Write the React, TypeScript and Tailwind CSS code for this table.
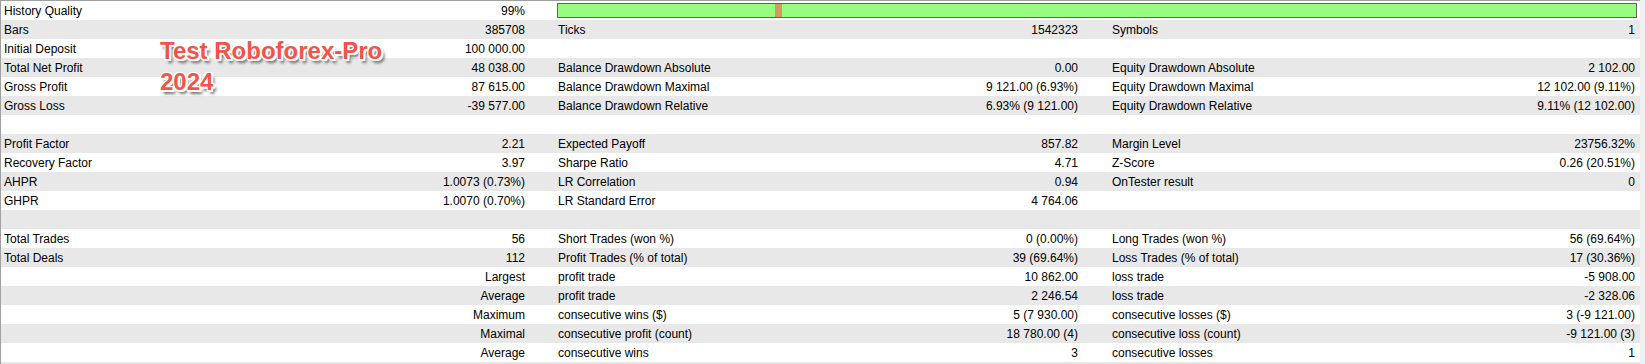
type Row = [string, string, string, string, string, string];

const rows: Row[] = [
  ["Bars", "385708", "Ticks", "1542323", "Symbols", "1"],
  ["Initial Deposit", "100 000.00", "", "", "", ""],
  ["Total Net Profit", "48 038.00", "Balance Drawdown Absolute", "0.00", "Equity Drawdown Absolute", "2 102.00"],
  ["Gross Profit", "87 615.00", "Balance Drawdown Maximal", "9 121.00 (6.93%)", "Equity Drawdown Maximal", "12 102.00 (9.11%)"],
  ["Gross Loss", "-39 577.00", "Balance Drawdown Relative", "6.93% (9 121.00)", "Equity Drawdown Relative", "9.11% (12 102.00)"],
  ["", "", "", "", "", ""],
  ["Profit Factor", "2.21", "Expected Payoff", "857.82", "Margin Level", "23756.32%"],
  ["Recovery Factor", "3.97", "Sharpe Ratio", "4.71", "Z-Score", "0.26 (20.51%)"],
  ["AHPR", "1.0073 (0.73%)", "LR Correlation", "0.94", "OnTester result", "0"],
  ["GHPR", "1.0070 (0.70%)", "LR Standard Error", "4 764.06", "", ""],
  ["", "", "", "", "", ""],
  ["Total Trades", "56", "Short Trades (won %)", "0 (0.00%)", "Long Trades (won %)", "56 (69.64%)"],
  ["Total Deals", "112", "Profit Trades (% of total)", "39 (69.64%)", "Loss Trades (% of total)", "17 (30.36%)"],
  ["", "Largest", "profit trade", "10 862.00", "loss trade", "-5 908.00"],
  ["", "Average", "profit trade", "2 246.54", "loss trade", "-2 328.06"],
  ["", "Maximum", "consecutive wins ($)", "5 (7 930.00)", "consecutive losses ($)", "3 (-9 121.00)"],
  ["", "Maximal", "consecutive profit (count)", "18 780.00 (4)", "consecutive loss (count)", "-9 121.00 (3)"],
  ["", "Average", "consecutive wins", "3", "consecutive losses", "1"],
];

const Cell = ({ label, value, className }: { label: string; value: string; className: string }) => (
  <div className={`flex items-center justify-between whitespace-nowrap ${className}`}>
    <span>{label}</span>
    <span>{value}</span>
  </div>
);

export default function App() {
  return (
    <div
      className="relative flex h-[364px] w-[1645px] overflow-hidden bg-white text-[12px] text-black"
      style={{ fontFamily: '"Liberation Sans", Arial, sans-serif' }}
    >
      <div className="flex flex-1 flex-col border-t border-l border-[#a0a0a0]">
        {/* quality row */}
        <div className="flex h-[19px] items-center bg-white">
          <Cell label="History Quality" value="99%" className="w-[554px] pl-[3px] pr-[30px]" />
          <div className="ml-[2px] mr-[3px] flex h-[15px] flex-1 border border-[#646464] bg-[#98fc80]">
            <div className="w-[217px]" />
            <div className="w-[7px] bg-[#d19a5e]" />
          </div>
        </div>

        {rows.map((r, i) => (
          <div key={i} className={`flex h-[19px] items-center ${i % 2 === 0 ? "bg-[#e8e8e8]" : "bg-white"}`}>
            <Cell label={r[0]} value={r[1]} className="w-[554px] pl-[3px] pr-[30px]" />
            <Cell label={r[2]} value={r[3]} className="w-[554px] pl-[3px] pr-[31px]" />
            <Cell label={r[4]} value={r[5]} className="flex-1 pl-[3px] pr-[5px]" />
          </div>
        ))}
        <div className="flex-1 bg-[#e8e8e8]" />
      </div>
      <div className="w-[5px] bg-[#f0f0f0]" />

      {/* watermark caption */}
      <div
        className="absolute left-[160px] top-[35px] text-[24px] leading-[31px] font-bold text-[#f2544c] [text-shadow:1px_1px_0_#fff,-1px_-1px_0_#fff,1px_-1px_0_#fff,-1px_1px_0_#fff,0_2px_0_#fff,2px_0_0_#fff,2px_2px_0_#fff,3px_4px_3px_rgba(0,0,0,0.6)]"
        style={{ fontFamily: '"Liberation Sans", Arial, sans-serif' }}
      >
        <div>Test Roboforex-Pro</div>
        <div>2024</div>
      </div>
    </div>
  );
}
